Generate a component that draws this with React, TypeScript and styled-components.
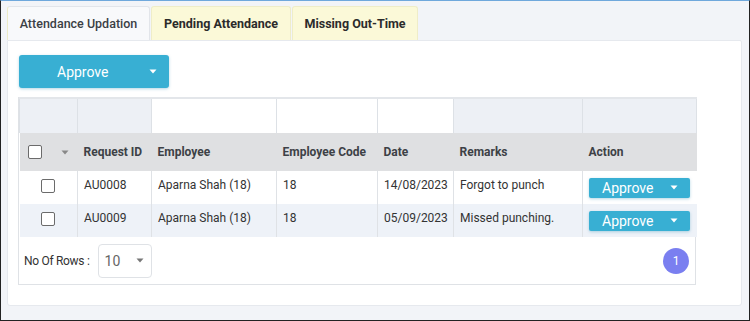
import styled, { createGlobalStyle } from 'styled-components'

const GlobalStyle = createGlobalStyle`
  html, body {
    margin: 0;
    padding: 0;
    background: #f2f4f8;
    font-family: Roboto, "Liberation Sans", Arial, sans-serif;
  }
`

interface Row {
  id: string
  employee: string
  code: string
  date: string
  remarks: string
}

const rows: Row[] = [
  { id: 'AU0008', employee: 'Aparna Shah (18)', code: '18', date: '14/08/2023', remarks: 'Forgot to punch' },
  { id: 'AU0009', employee: 'Aparna Shah (18)', code: '18', date: '05/09/2023', remarks: 'Missed punching.' },
]

const tabs = ['Attendance Updation', 'Pending Attendance', 'Missing Out-Time']

const colWidths = [58, 74, 125, 101, 76, 129, 114]

const Caret = ({ color = '#fff' }: { color?: string }) => (
  <svg width="8" height="5" viewBox="0 0 8 5">
    <path d="M0.5 0.5 L7.5 0.5 L4 4.5 Z" fill={color} />
  </svg>
)

const App = () => {
  return (
    <>
      <GlobalStyle />
      <Frame>
        <TabBar>
          {tabs.map((t, i) => (
            <Tab key={t} active={i === 0} width={i === 0 ? 143 : i === 1 ? 140 : 126}>
              {t}
            </Tab>
          ))}
        </TabBar>
        <Card>
          <BigButton>
            <span>Approve</span>
            <Caret />
          </BigButton>
          <TableWrap>
            <Table>
              <colgroup>
                {colWidths.map((w, i) => (
                  <col key={i} style={{ width: w }} />
                ))}
              </colgroup>
              <thead>
                <FilterRow>
                  <FilterCell />
                  <FilterCell />
                  <FilterCell input />
                  <FilterCell input />
                  <FilterCell input />
                  <FilterCell />
                  <FilterCell />
                </FilterRow>
                <HeadRow>
                  <HeadCell>
                    <SelectAll>
                      <Check />
                      <Caret color="#888" />
                    </SelectAll>
                  </HeadCell>
                  <HeadCell>Request ID</HeadCell>
                  <HeadCell>Employee</HeadCell>
                  <HeadCell>Employee Code</HeadCell>
                  <HeadCell>Date</HeadCell>
                  <HeadCell>Remarks</HeadCell>
                  <HeadCell>Action</HeadCell>
                </HeadRow>
              </thead>
              <tbody>
                {rows.map((r, i) => (
                  <BodyRow key={r.id} alt={i % 2 === 1}>
                    <BodyCell>
                      <CheckWrap>
                        <Check />
                      </CheckWrap>
                    </BodyCell>
                    <BodyCell>{r.id}</BodyCell>
                    <BodyCell>{r.employee}</BodyCell>
                    <BodyCell>{r.code}</BodyCell>
                    <BodyCell>{r.date}</BodyCell>
                    <BodyCell>{r.remarks}</BodyCell>
                    <BodyCell>
                      <SmallButton>
                        <span>Approve</span>
                        <Caret />
                      </SmallButton>
                    </BodyCell>
                  </BodyRow>
                ))}
              </tbody>
            </Table>
            <Footer>
              <RowsPicker>
                <RowsLabel>No Of Rows :</RowsLabel>
                <RowsSelect>
                  <span>10</span>
                  <Caret color="#777" />
                </RowsSelect>
              </RowsPicker>
              <PageBubble>1</PageBubble>
            </Footer>
          </TableWrap>
        </Card>
      </Frame>
    </>
  )
}

const Frame = styled.div`
  box-sizing: border-box;
  width: 750px;
  height: 321px;
  border: 1px solid #222;
  border-top-color: #6fa8dc;
  background: #f2f4f8;
  padding: 5px 6px 0 6px;
  display: flex;
  flex-direction: column;
`

const TabBar = styled.div`
  display: flex;
  height: 34px;
`

const Tab = styled.div<{ active: boolean; width: number }>`
  box-sizing: border-box;
  width: ${({ width }) => width}px;
  display: flex;
  align-items: center;
  justify-content: center;
  font-size: 12.5px;
  font-weight: ${({ active }) => (active ? 500 : 700)};
  color: ${({ active }) => (active ? '#3b3f45' : '#2b2b2b')};
  background: ${({ active }) => (active ? '#f8f9fb' : '#fbf9d8')};
  border: 1px solid ${({ active }) => (active ? '#e2e5ea' : '#efedc8')};
  border-bottom: none;
  border-left-color: ${({ active }) => (active ? '#ecebc8' : '#efedc8')};
  border-radius: 3px 3px 0 0;
  margin-right: 1px;
`

const Card = styled.div`
  box-sizing: border-box;
  width: 735px;
  height: 266px;
  background: #fff;
  border: 1px solid #e6e9ee;
  border-radius: 0 2px 3px 3px;
  padding: 14px 0 0 10px;
  display: flex;
  flex-direction: column;
  align-items: flex-start;
`

const BigButton = styled.div`
  box-sizing: border-box;
  width: 150px;
  height: 33px;
  margin-left: 1px;
  background: #38afd3;
  border-radius: 3px;
  box-shadow: 0 1px 3px rgba(40, 140, 180, 0.35);
  color: #fff;
  font-size: 14px;
  display: flex;
  align-items: center;
  justify-content: space-between;
  padding: 0 12px 0 38px;
  margin-bottom: 9px;
`

const TableWrap = styled.div`
  box-sizing: border-box;
  width: 678px;
  border: 1px solid #dfe2e6;
  border-top: none;
`

const Table = styled.table`
  width: 677px;
  border-collapse: collapse;
  table-layout: fixed;
  font-size: 12px;
`

const FilterRow = styled.tr`
  height: 35px;
`

const FilterCell = styled.td<{ input?: boolean }>`
  padding: 0;
  background: ${({ input }) => (input ? '#fff' : '#edf0f5')};
  border: 1px solid #dde1e6;
  border-top: 2px solid #e3e6ea;
  border-bottom: none;
`

const HeadRow = styled.tr`
  height: 38px;
  background: #dfe0e2;
`

const HeadCell = styled.th`
  text-align: left;
  font-weight: 700;
  color: #3d4146;
  padding: 0 0 0 6px;
  font-size: 12px;
`

const SelectAll = styled.div`
  display: flex;
  align-items: center;
  gap: 19px;
  padding-left: 2px;
`

const Check = styled.span`
  display: inline-block;
  box-sizing: border-box;
  width: 14px;
  height: 14px;
  border: 1px solid #6b6b6b;
  border-radius: 2px;
  background: #fff;
`

const CheckWrap = styled.div`
  display: flex;
  justify-content: flex-start;
  padding: 2px 0 0 15px;
`

const BodyRow = styled.tr<{ alt: boolean }>`
  height: 33px;
  background: ${({ alt }) => (alt ? '#eef2f8' : '#fff')};
`

const BodyCell = styled.td`
  color: #333;
  padding: 0 0 5px 6px;
  border-left: 1px solid #dfe2e6;
  white-space: nowrap;
  &:first-child {
    border-left: none;
  }
`

const SmallButton = styled.div`
  box-sizing: border-box;
  width: 101px;
  height: 20px;
  margin-top: 5px;
  background: #38afd3;
  border-radius: 2px;
  box-shadow: 0 1px 3px rgba(40, 140, 180, 0.35);
  color: #fff;
  font-size: 14px;
  display: flex;
  align-items: center;
  justify-content: space-between;
  padding: 0 12px 0 13px;
`

const Footer = styled.div`
  height: 47px;
  display: flex;
  align-items: center;
  justify-content: space-between;
  padding: 0 6px 0 5px;
`

const RowsPicker = styled.div`
  display: flex;
  align-items: center;
  gap: 8px;
`

const RowsLabel = styled.span`
  font-size: 12px;
  color: #333;
  letter-spacing: -0.3px;
`

const RowsSelect = styled.div`
  box-sizing: border-box;
  width: 54px;
  height: 34px;
  border: 1px solid #dfe2e6;
  border-radius: 4px;
  display: flex;
  align-items: center;
  justify-content: space-between;
  padding: 0 7px 0 6px;
  font-size: 14px;
  color: #666;
`

const PageBubble = styled.div`
  width: 26px;
  height: 26px;
  border-radius: 50%;
  background: #7a7ff0;
  color: #fff;
  font-size: 12px;
  display: flex;
  align-items: center;
  justify-content: center;
`

export default App
